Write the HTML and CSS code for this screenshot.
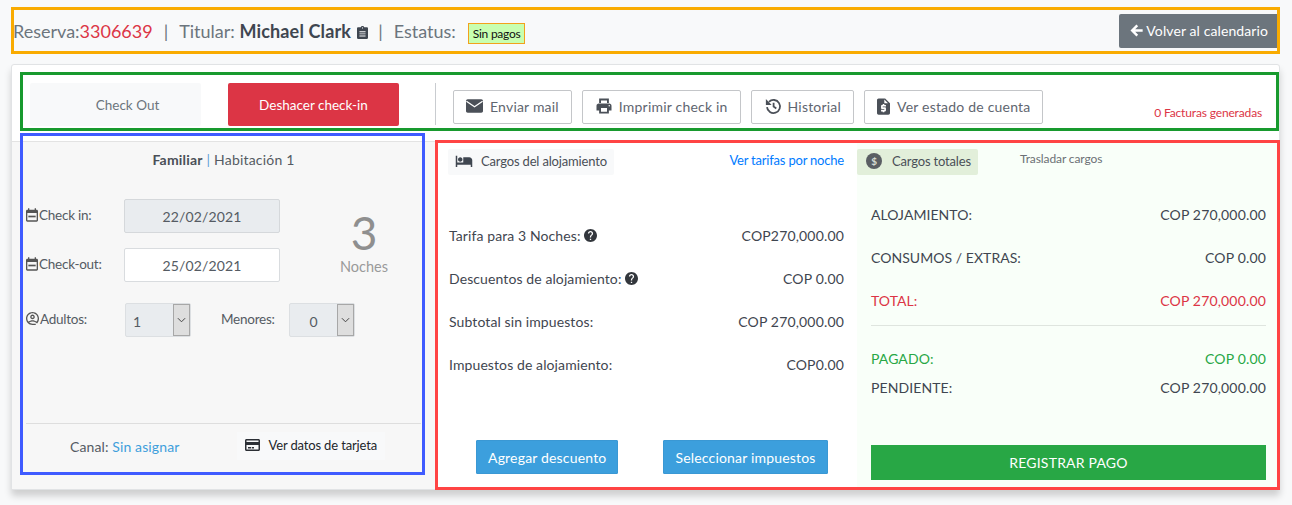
FILE: index.html
```html
<!DOCTYPE html>
<html lang="es">
<head>
<meta charset="utf-8">
<title>Reserva 3306639</title>
<link rel="stylesheet" href="styles.css">
</head>
<body>
<svg class="sprite" aria-hidden="true">
  <symbol id="i-mail" viewBox="2 4 20 16"><path d="M4 4h16c1.100 0 2 .9 2 2v12c0 1.100-.9 2-2 2H4c-1.100 0-2-.9-2-2V6c0-1.100.9-2 2-2z"/><path class="mail-v" d="M2.500 6.500l9.500 6.500 9.500-6.500"/></symbol>
  <symbol id="i-print" viewBox="0 0 24 24"><path d="M19 8.500H5c-1.660 0-3 1.340-3 3V18h3.500v4h13v-4H22v-6.500c0-1.660-1.340-3-3-3zM16 19.500H8V14.500h8v5zm3-7c-.55 0-1-.45-1-1s.45-1 1-1 1 .45 1 1-.45 1-1 1z"/><path d="M5.500 2h13v6H16V4.500H8V8H5.500z"/></symbol>
  <symbol id="i-history" viewBox="0 0 24 24"><path class="hist-line" d="M6.600 6.400A8.700 8.700 0 1 1 4 13.500"/><path d="M2.500 2.800v7.700h7.700z"/><path class="hist-line" d="M12.800 7.500v5.200l3.600 2.500"/></symbol>
  <symbol id="i-quote" viewBox="4 2 16 20"><path d="M14 2H6c-1.100 0-1.990.9-1.990 2L4 20c0 1.100.89 2 1.990 2H18c1.100 0 2-.9 2-2V8l-6-6zm1 10h-4v1h3c.55 0 1 .45 1 1v3c0 .55-.45 1-1 1h-1v1h-2v-1H9v-2h4v-1h-3c-.55 0-1-.45-1-1v-3c0-.55.45-1 1-1h1V9h2v1h2v2zm-2-4V3.500L17.500 8H13z"/></symbol>
  <symbol id="i-bed" viewBox="0 0 24 24"><path d="M7 13c1.660 0 3-1.340 3-3S8.660 7 7 7s-3 1.340-3 3 1.340 3 3 3zm12-6h-8v7H3V5H1v15h2v-3h18v3h2v-9c0-2.210-1.790-4-4-4z"/></symbol>
  <symbol id="i-card" viewBox="2 4 20 16"><path d="M20 4H4c-1.110 0-1.990.89-1.990 2L2 18c0 1.110.89 2 2 2h16c1.110 0 2-.89 2-2V6c0-1.110-.89-2-2-2zm0 14H4v-6h16v6zm0-10H4V6h16v2z"/><path d="M6 14.500h4v2H6zM11 14.500h3v2h-3z"/></symbol>
  <symbol id="i-help" viewBox="2 2 20 20"><path d="M12 2C6.480 2 2 6.480 2 12s4.480 10 10 10 10-4.480 10-10S17.520 2 12 2zm1 17h-2v-2h2v2zm2.070-7.750l-.9.92C13.450 12.900 13 13.500 13 15h-2v-.5c0-1.100.45-2.100 1.170-2.830l1.240-1.260c.37-.36.59-.86.59-1.410 0-1.100-.9-2-2-2s-2 .9-2 2H8c0-2.210 1.790-4 4-4s4 1.790 4 4c0 .88-.36 1.680-.93 2.250z"/></symbol>
  <symbol id="i-cal" viewBox="3 2 18 20"><path d="M19 4h-1V2h-2v2H8V2H6v2H5c-1.100 0-2 .9-2 2v14c0 1.100.9 2 2 2h14c1.100 0 2-.9 2-2V6c0-1.100-.9-2-2-2zm0 16H5V9h14v11z"/><path d="M6.500 13h11v2.500h-11z"/></symbol>
  <symbol id="i-user" viewBox="2 2 20 20"><path d="M12 2C6.480 2 2 6.480 2 12s4.480 10 10 10h5v-2h-5c-1.900 0-3.700-.7-5.100-1.800C8.400 17 10.100 16.500 12 16.500s3.600.5 5.100 1.700l1.400-1.400C16.700 15.400 14.400 14.500 12 14.500s-4.700.9-6.500 2.300C4.600 15.500 4 13.800 4 12c0-4.400 3.600-8 8-8s8 3.600 8 8c0 1.800-.6 3.500-1.500 4.800L17.100 18.200 19 19.500c1.900-1.800 3-4.500 3-7.500 0-5.520-4.480-10-10-10z"/><path d="M12 6c-1.900 0-3.500 1.600-3.500 3.500S10.100 13 12 13s3.500-1.600 3.500-3.500S13.900 6 12 6zm0 5c-.8 0-1.500-.7-1.500-1.500S11.200 8 12 8s1.500.7 1.500 1.500S12.800 11 12 11z"/></symbol>
  <symbol id="i-clip" viewBox="3 1 18 21"><path d="M19 3h-4.200C14.400 1.800 13.300 1 12 1s-2.400.8-2.800 2H5c-1.100 0-2 .9-2 2v15c0 1.100.9 2 2 2h14c1.100 0 2-.9 2-2V5c0-1.100-.9-2-2-2zm-7 0c.6 0 1 .4 1 1s-.4 1-1 1-1-.4-1-1 .4-1 1-1zm5 15H7v-1.500h10V18zm0-3.500H7V13h10v1.500zm0-3.500H7V9.500h10V11z"/></symbol>
  <symbol id="i-arrow" viewBox="2 3 19 18"><path d="M20.500 10H9.600l4.300-4.300-2.500-2.500L2.700 12l8.700 8.800 2.500-2.500L9.600 14h10.900z"/></symbol>
</svg>

<header class="topbar">
  <div class="summary">
    <span>Reserva:<span class="code">3306639</span></span>
    <span class="sep">|</span>
    <span>Titular: <strong class="holder">Michael Clark</strong></span>
    <svg class="ico-clip"><use href="#i-clip"/></svg>
    <span class="sep sep-b">|</span>
    <span>Estatus:</span>
    <span class="badge">Sin pagos</span>
  </div>
  <a class="btn-back"><svg class="ico-arrow"><use href="#i-arrow"/></svg>Volver al calendario</a>
</header>

<main class="card">
  <section class="toolbar">
    <a class="action action-light">Check Out</a>
    <a class="action action-red">Deshacer check-in</a>
    <span class="divider"></span>
    <div class="tools">
      <a class="tool"><svg class="ico-mail"><use href="#i-mail"/></svg>Enviar mail</a>
      <a class="tool"><svg class="ico-tool"><use href="#i-print"/></svg>Imprimir check in</a>
      <a class="tool"><svg class="ico-tool"><use href="#i-history"/></svg>Historial</a>
      <a class="tool"><svg class="ico-quote"><use href="#i-quote"/></svg>Ver estado de cuenta</a>
    </div>
    <span class="invoices">0 Facturas generadas</span>
  </section>

  <section class="content">
    <aside class="room">
      <h2 class="room-title"><strong>Familiar</strong> <span class="bar">|</span> Habitación 1</h2>
      <div class="stay">
        <div class="dates">
          <div class="date-row">
            <label class="lbl"><svg class="ico-lbl"><use href="#i-cal"/></svg>Check in:</label>
            <div class="field field-off">22/02/2021</div>
          </div>
          <div class="date-row">
            <label class="lbl"><svg class="ico-lbl"><use href="#i-cal"/></svg>Check-out:</label>
            <div class="field">25/02/2021</div>
          </div>
        </div>
        <div class="nights">
          <div class="nights-num">3</div>
          <div class="nights-lbl">Noches</div>
        </div>
      </div>
      <div class="guests">
        <label class="lbl lbl-adults"><svg class="ico-lbl ico-user"><use href="#i-user"/></svg>Adultos:</label>
        <div class="sel"><span class="sel-val sel-left">1</span><span class="sel-arrow"><svg viewBox="0 0 10 6" class="chev"><path d="M1 1l4 4 4-4"/></svg></span></div>
        <label class="lbl lbl-minors">Menores:</label>
        <div class="sel"><span class="sel-val">0</span><span class="sel-arrow"><svg viewBox="0 0 10 6" class="chev"><path d="M1 1l4 4 4-4"/></svg></span></div>
      </div>
      <footer class="room-foot">
        <span class="channel">Canal: <a class="channel-link">Sin asignar</a></span>
        <a class="card-btn"><svg class="ico-card"><use href="#i-card"/></svg>Ver datos de tarjeta</a>
      </footer>
    </aside>

    <div class="lodging">
      <div class="lodging-head">
        <span class="tab"><svg class="ico-bed"><use href="#i-bed"/></svg>Cargos del alojamiento</span>
        <a class="rates">Ver tarifas por noche</a>
      </div>
      <dl class="rows">
        <div class="row"><dt>Tarifa para 3 Noches: <svg class="ico-help"><use href="#i-help"/></svg></dt><dd>COP270,000.00</dd></div>
        <div class="row"><dt>Descuentos de alojamiento: <svg class="ico-help"><use href="#i-help"/></svg></dt><dd>COP 0.00</dd></div>
        <div class="row"><dt>Subtotal sin impuestos:</dt><dd>COP 270,000.00</dd></div>
        <div class="row"><dt>Impuestos de alojamiento:</dt><dd>COP0.00</dd></div>
      </dl>
      <div class="lodging-btns">
        <a class="btn-blue">Agregar descuento</a>
        <a class="btn-blue">Seleccionar impuestos</a>
      </div>
    </div>

    <div class="totals">
      <div class="totals-head">
        <span class="tab tab-green"><span class="coin">$</span>Cargos totales</span>
        <a class="move">Trasladar cargos</a>
      </div>
      <dl class="sum">
        <div class="row"><dt>ALOJAMIENTO:</dt><dd>COP 270,000.00</dd></div>
        <div class="row"><dt>CONSUMOS / EXTRAS:</dt><dd>COP 0.00</dd></div>
        <div class="row row-red"><dt>TOTAL:</dt><dd>COP 270,000.00</dd></div>
      </dl>
      <hr class="rule">
      <dl class="paid">
        <div class="row row-green"><dt>PAGADO:</dt><dd>COP 0.00</dd></div>
        <div class="row"><dt>PENDIENTE:</dt><dd>COP 270,000.00</dd></div>
      </dl>
      <a class="btn-pay">REGISTRAR PAGO</a>
    </div>
  </section>
</main>

<div class="frame frame-orange"></div>
<div class="frame frame-green"></div>
<div class="frame frame-blue"></div>
<div class="frame frame-red"></div>
</body>
</html>
```

FILE: styles.css
```css
* { box-sizing: border-box; }
html, body { margin: 0; height: 505px; overflow: hidden; }
body {
  position: relative;
  background: #f8f9fa;
  font-family: Lato, "Liberation Sans", sans-serif;
  font-size: 14px;
  color: #3f4650;
}
.sprite { display: none; }
svg { fill: currentColor; flex: none; }
dl, dt, dd, h2 { margin: 0; font-weight: 400; }

/* annotation frames */
.frame { position: absolute; border: 3px solid; pointer-events: none; }
.frame-orange { left: 11px; top: 7px; width: 1269px; height: 47px; border-color: #f9ab00; }
.frame-green { left: 20px; top: 72px; width: 1259px; height: 59px; border-color: #189a2e; }
.frame-blue { left: 20px; top: 133px; width: 405px; height: 342px; border-color: #3f5bff; }
.frame-red { left: 435px; top: 140px; width: 845px; height: 350px; border-color: #ff4444; }

/* top bar */
.topbar { display: flex; justify-content: space-between; align-items: center; height: 34px; margin: 14px 13px 16px 13px; }
.summary { display: flex; align-items: center; font-size: 18px; color: #6c757d; white-space: nowrap; }
.code { color: #dc3545; }
.sep { margin: 0 11px; }
.sep-b { margin: 0 11px 0 10px; }
.holder { color: #3f4650; font-weight: 700; letter-spacing: .15px; }
.ico-clip { width: 11px; height: 13px; margin: 2px 0 0 6px; color: #3f4650; }
.badge { margin: 4px 0 0 12px; padding: 0 4px; height: 21px; line-height: 20px; font-size: 12px; letter-spacing: -.25px; color: #111; background: #c8ffb0; border: 1px solid #f2a21c; }
.btn-back { display: flex; align-items: center; height: 34px; padding: 0 11px 2px; background: #6c757d; color: #fff; border-radius: 2px; font-size: 14px; letter-spacing: .1px; }
.ico-arrow { width: 13px; height: 13px; margin-right: 3px; }

/* card */
.card { width: 1269px; height: 426px; margin-left: 11px; display: flex; flex-direction: column; background: #fff; border: 1px solid #e1e3e5; border-radius: 3px; box-shadow: 0 6px 7px rgba(0,0,0,.17); }
.toolbar { display: flex; align-items: flex-start; height: 76px; padding: 18px 17px 0 18px; }
.action { display: flex; align-items: center; justify-content: center; width: 171px; height: 43px; border-radius: 2px; font-size: 13.500px; }
.action-light { padding-left: 24px; background: #f8f9fa; color: #6c757d; font-size: 13.500px; }
.action-red { margin-left: 27px; background: #dc3545; color: #fff; }
.divider { width: 1px; height: 42px; margin: 0 17px 0 36px; background: #c9ccd0; }
.tools { display: flex; gap: 10px; margin-top: 7px; }
.tool { display: flex; align-items: center; height: 34px; padding: 0 12px 2px; border: 1px solid #c4c6c9; border-radius: 2px; font-size: 14px; color: #5f6670; letter-spacing: .2px; white-space: nowrap; }
.ico-mail { width: 17px; height: 14px; margin-right: 7px; color: #4b5058; }
.mail-v { fill: none; stroke: #fff; stroke-width: 1.500; }
.ico-tool { width: 18px; height: 18px; margin-right: 6px; color: #4b5058; }
.hist-line { fill: none; stroke: currentColor; stroke-width: 2.400; }
.ico-quote { width: 13px; height: 17px; margin-right: 7px; color: #4b5058; }
.invoices { margin: 22px 0 0 auto; font-size: 12px; letter-spacing: -.15px; color: #dc3545; }

.content { flex: 1; display: grid; grid-template-columns: 423px 422px 1fr; min-height: 0; }

/* left panel */
.room { display: flex; flex-direction: column; background: #f7f7f7; border-top: 1px solid #e3e3e3; }
.room-title { padding-top: 9px; height: 57px; text-align: center; font-size: 14px; line-height: 17px; letter-spacing: .2px; color: #555b63; }
.room-title strong { color: #4a4f57; }
.bar { color: #5f9fd8; }
.stay { display: flex; padding-left: 14px; }
.dates { width: 268px; }
.date-row { display: flex; align-items: center; height: 34px; margin-bottom: 15px; }
.lbl { display: flex; align-items: center; font-size: 13.500px; letter-spacing: -.25px; color: #555b63; }
.date-row .lbl { width: 98px; margin-top: -2px; }
.ico-lbl { width: 12px; height: 14px; margin-right: 1px; color: #555; }
.ico-user { width: 13px; height: 13px; }
.field { width: 156px; height: 34px; line-height: 34px; text-align: center; background: #fff; border: 1px solid #d9dcdf; border-radius: 2px; font-size: 14px; letter-spacing: .15px; color: #555b63; }
.field-off { background: #e9ecef; border-color: #d5d8db; }
.nights { width: 140px; text-align: center; color: #9a9a9a; padding-top: 8px; }
.nights-num { font-size: 46px; line-height: 52px; color: #8f8f8f; }
.nights-lbl { margin-top: -2px; font-size: 14.500px; line-height: 20px; }
.guests { display: flex; align-items: center; padding-left: 14px; margin-top: 6px; }
.lbl-adults { width: 99px; margin-top: -3px; }
.lbl-minors { width: 68px; margin: -3px 0 0 30px; }
.sel { display: flex; width: 66px; height: 34px; background: #e9ecef; border: 1px solid #dcdfe2; border-radius: 2px; }
.sel-val { flex: 1; text-align: center; line-height: 36px; font-size: 14px; color: #555b63; }
.sel-left { text-align: left; padding-left: 7px; }
.sel-arrow { display: flex; align-items: center; justify-content: center; width: 17px; background: #dedede; border: 1px solid #a7a7a7; }
.chev { width: 9px; height: 6px; fill: none; stroke: #444; stroke-width: 1.100; }
.room-foot { display: flex; align-items: center; height: 66px; margin: auto 14px 0; padding: 0 36px 21px 44px; justify-content: space-between; border-top: 1px solid #dedede; }
.channel { font-size: 14px; letter-spacing: .12px; color: #555b63; }
.channel-link { color: #3f9fdc; }
.card-btn { display: flex; align-items: center; height: 28px; padding: 0 8px 2px; background: #f8f9fa; font-size: 13px; letter-spacing: -.15px; color: #22262b; white-space: nowrap; }
.ico-card { width: 15px; height: 12px; margin-right: 9px; color: #2b2f35; }

/* lodging column */
.lodging { display: flex; flex-direction: column; padding: 8px 0 0 13px; }
.lodging-head { display: flex; justify-content: space-between; align-items: flex-start; padding-right: 13px; }
.tab { display: flex; align-items: center; height: 26px; padding: 0 7px 2px; background: #f8f9fa; border-radius: 2px; font-size: 13px; letter-spacing: -.17px; color: #4a4f57; white-space: nowrap; }
.ico-bed { width: 18px; height: 18px; margin-right: 8px; color: #3f4650; }
.rates { margin-top: 3px; font-size: 13px; color: #007bff; letter-spacing: -.2px; }
.rows { padding: 39px 9px 0 1px; margin-right: 4px; }
.row { display: flex; justify-content: space-between; align-items: center; height: 43px; font-size: 14px; letter-spacing: .1px; color: #3f4650; }
.row dt { display: flex; align-items: center; gap: 3px; }
.row dd { letter-spacing: .17px; }
.ico-help { width: 13px; height: 13px; color: #33373d; }
.lodging-btns { display: flex; margin-top: 54px; padding-left: 28px; gap: 45px; }
.btn-blue { display: flex; align-items: center; height: 34px; padding: 0 11px; background: #3c9fdd; border: 1px solid #3a98d4; border-radius: 1px; color: #fff; font-size: 14px; letter-spacing: .18px; white-space: nowrap; }

/* totals column */
.totals { display: flex; flex-direction: column; background: #f9fff9; margin-right: 2px; padding-top: 8px; }
.totals-head { display: flex; align-items: flex-start; }
.tab-green { background: #e2efda; width: 121px; padding-left: 9px; }
.coin { display: flex; align-items: center; justify-content: center; width: 16px; height: 16px; margin-right: 10px; border-radius: 50%; background: #5a5e63; color: #d6dbd2; font-size: 10px; font-weight: 700; }
.move { margin: 2px 0 0 42px; font-size: 12px; letter-spacing: -.1px; color: #6c7075; }
.sum { margin: 18px 11px 0 14px; }
.sum dt { letter-spacing: .05px; }
.rule { height: 1px; margin: 3px 11px 0 14px; border: 0; background: #dfe5df; }
.paid { margin: 18px 11px 0 14px; }
.paid .row { height: 29px; }
.row-red { color: #dc3545; }
.row-green { color: #28a745; }
.btn-pay { display: flex; align-items: center; justify-content: center; height: 35px; margin: 43px 11px 0 14px; background: #28a745; color: #fff; font-size: 14px; letter-spacing: .2px; }
```
